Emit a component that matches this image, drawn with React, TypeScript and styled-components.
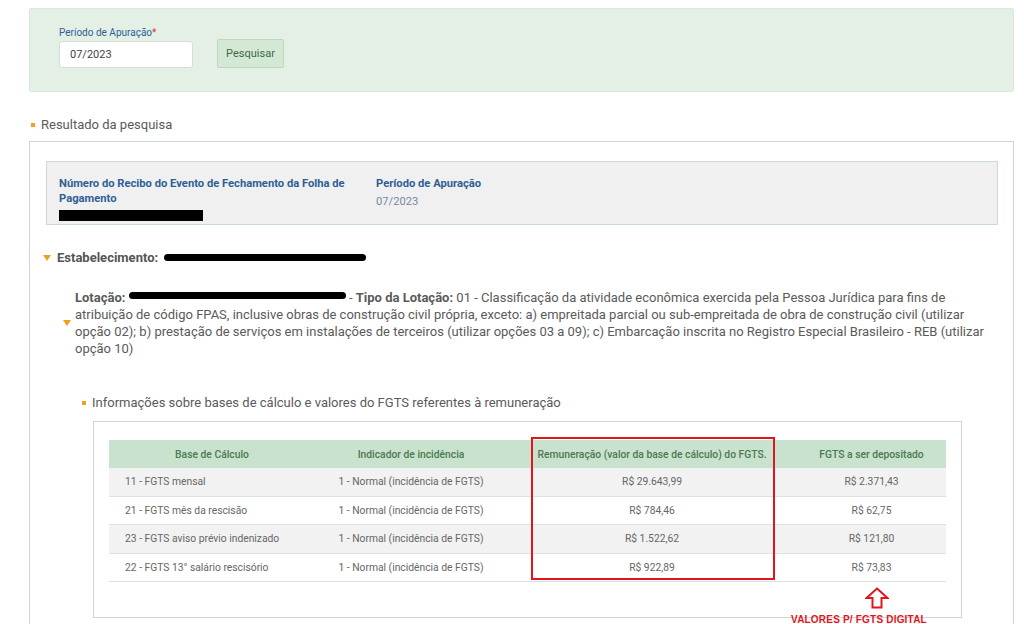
import React from 'react'
import styled, { createGlobalStyle } from 'styled-components'

const GlobalStyle = createGlobalStyle`
  html, body {
    margin: 0;
    padding: 0;
    background: #ffffff;
    font-family: Roboto, 'Liberation Sans', Arial, sans-serif;
    color: #555555;
    overflow: hidden;
  }
`

type Row = {
  base: string
  indicador: string
  remuneracao: string
  fgts: string
}

const rows: Row[] = [
  { base: '11 - FGTS mensal', indicador: '1 - Normal (incidência de FGTS)', remuneracao: 'R$ 29.643,99', fgts: 'R$ 2.371,43' },
  { base: '21 - FGTS mês da rescisão', indicador: '1 - Normal (incidência de FGTS)', remuneracao: 'R$ 784,46', fgts: 'R$ 62,75' },
  { base: '23 - FGTS aviso prévio indenizado', indicador: '1 - Normal (incidência de FGTS)', remuneracao: 'R$ 1.522,62', fgts: 'R$ 121,80' },
  { base: '22 - FGTS 13° salário rescisório', indicador: '1 - Normal (incidência de FGTS)', remuneracao: 'R$ 922,89', fgts: 'R$ 73,83' },
]

const App: React.FC = () => {
  return (
    <>
      <GlobalStyle />
      <Page>
        <SearchPanel>
          <Field>
            <Label>
              Período de Apuração<Required>*</Required>
            </Label>
            <Input defaultValue="07/2023" />
          </Field>
          <SearchButton>Pesquisar</SearchButton>
        </SearchPanel>

        <SectionTitle>Resultado da pesquisa</SectionTitle>

        <ResultBox>
          <InfoPanel>
            <InfoCol $width={305}>
              <InfoLabel>Número do Recibo do Evento de Fechamento da Folha de Pagamento</InfoLabel>
              <Redacted $width={144} $height={11} />
            </InfoCol>
            <InfoCol $width={200}>
              <InfoLabel>Período de Apuração</InfoLabel>
              <InfoValue>07/2023</InfoValue>
            </InfoCol>
          </InfoPanel>

          <Estabelecimento>
            <Caret />
            <strong>Estabelecimento:</strong>
            <Redacted $width={202} $height={7} $round />
          </Estabelecimento>

          <Lotacao>
            <Caret />
            <LotacaoText>
              <strong>Lotação:</strong> <Redacted $width={217} $height={7} $round $inline /> - <strong>Tipo da Lotação:</strong>{' '}
              01 - Classificação da atividade econômica exercida pela Pessoa Jurídica para fins de atribuição de código
              FPAS, inclusive obras de construção civil própria, exceto: a) empreitada parcial ou sub-empreitada de obra
              de construção civil (utilizar opção 02); b) prestação de serviços em instalações de terceiros (utilizar
              opções 03 a 09); c) Embarcação inscrita no Registro Especial Brasileiro - REB (utilizar opção 10)
            </LotacaoText>
          </Lotacao>

          <SubTitle>Informações sobre bases de cálculo e valores do FGTS referentes à remuneração</SubTitle>

          <TableBox>
            <Table>
              <colgroup>
                <Col $width={206} />
                <Col $width={192} />
                <Col $width={290} />
                <Col />
              </colgroup>
              <thead>
                <tr>
                  <Th>Base de Cálculo</Th>
                  <Th>Indicador de incidência</Th>
                  <Th>Remuneração (valor da base de cálculo) do FGTS.</Th>
                  <Th>FGTS a ser depositado</Th>
                </tr>
              </thead>
              <tbody>
                {rows.map((r) => (
                  <Tr key={r.base}>
                    <Td>{r.base}</Td>
                    <Td $center>{r.indicador}</Td>
                    <Td $center>{r.remuneracao}</Td>
                    <Td $center>{r.fgts}</Td>
                  </Tr>
                ))}
              </tbody>
            </Table>

            <Highlight />
            <Arrow viewBox="0 0 24 22" width="24" height="22">
              <path d="M12 1.5 L22.5 11 L16.5 11 L16.5 20.5 L7.5 20.5 L7.5 11 L1.5 11 Z" fill="none" stroke="#e3151c" strokeWidth="2" />
            </Arrow>
            <Note>VALORES P/ FGTS DIGITAL</Note>
          </TableBox>
        </ResultBox>
      </Page>
    </>
  )
}
export default App

const Page = styled.div`
  padding: 8px 10px 0 29px;
`

const SearchPanel = styled.div`
  display: flex;
  align-items: flex-end;
  gap: 24px;
  height: 84px;
  box-sizing: border-box;
  padding: 24px 29px 23px;
  background: #e4efe5;
  border: 1px solid #dbe9dc;
  border-radius: 2px;
`

const Field = styled.div`
  display: flex;
  flex-direction: column;
  gap: 2px;
`

const Label = styled.label`
  font-size: 10px;
  line-height: 13px;
  color: #2d5f95;
`

const Required = styled.span`
  color: #d9333f;
`

const Input = styled.input`
  width: 134px;
  height: 27px;
  box-sizing: border-box;
  border: 1px solid #d6dbe0;
  border-radius: 3px;
  padding: 0 10px;
  font-family: Roboto, 'Liberation Sans', Arial, sans-serif;
  font-size: 11px;
  color: #444;
  background: #ffffff;
  outline: none;
`

const SearchButton = styled.button`
  height: 29px;
  width: 67px;
  box-sizing: border-box;
  padding: 0;
  border: 1px solid #bcd8bf;
  border-radius: 2px;
  background: #d3e8d5;
  color: #3e6a42;
  font-family: Roboto, 'Liberation Sans', Arial, sans-serif;
  font-size: 11px;
  cursor: pointer;
`

const SectionTitle = styled.h3`
  display: flex;
  align-items: center;
  gap: 6px;
  margin: 24px 0 8px 2px;
  font-size: 13px;
  line-height: 17px;
  font-weight: normal;
  color: #5a5a5a;
  &::before {
    content: '';
    width: 4px;
    height: 4px;
    background: #f0a020;
  }
`

const ResultBox = styled.div`
  border: 1px solid #ccd5df;
  border-bottom: none;
  padding: 19px 15px 0 16px;
  min-height: 500px;
`

const InfoPanel = styled.div`
  display: flex;
  gap: 12px;
  background: #f0f0f0;
  border: 1px solid #c9ddc9;
  padding: 14px 12px 3px;
  height: 64px;
  box-sizing: border-box;
`

const InfoCol = styled.div<{ $width: number }>`
  width: ${(p) => p.$width}px;
  display: flex;
  flex-direction: column;
`

const InfoLabel = styled.div`
  font-size: 11.2px;
  line-height: 15px;
  font-weight: bold;
  color: #2d5f95;
`

const InfoValue = styled.div`
  font-size: 11.2px;
  line-height: 15px;
  margin-top: 3px;
  color: #7689a0;
`

const Redacted = styled.span<{ $width: number; $height: number; $round?: boolean; $inline?: boolean }>`
  display: inline-block;
  flex-shrink: 0;
  width: ${(p) => p.$width}px;
  height: ${(p) => p.$height}px;
  background: #000000;
  border-radius: ${(p) => (p.$round ? '4px' : '0')};
  margin-top: ${(p) => (p.$round ? '0' : '4px')};
  vertical-align: ${(p) => (p.$inline ? '3px' : 'baseline')};
`

const Caret = styled.span`
  flex-shrink: 0;
  width: 0;
  height: 0;
  border-left: 4px solid transparent;
  border-right: 4px solid transparent;
  border-top: 6px solid #f0a020;
`

const Estabelecimento = styled.div`
  display: flex;
  align-items: center;
  gap: 6px;
  margin: 24px 0 0 -3px;
  font-size: 13px;
  line-height: 17px;
  color: #555;
  strong {
    font-weight: bold;
  }
`

const Lotacao = styled.div`
  display: flex;
  align-items: center;
  gap: 4px;
  margin: 23px 6px 0 17px;
`

const LotacaoText = styled.p`
  margin: 0;
  font-size: 13px;
  line-height: 17px;
  color: #5a5a5a;
  strong {
    font-weight: bold;
  }
`

const SubTitle = styled.h4`
  display: flex;
  align-items: center;
  gap: 6px;
  margin: 37px 0 10px 36px;
  font-size: 13px;
  line-height: 17px;
  font-weight: normal;
  color: #5a5a5a;
  &::before {
    content: '';
    width: 4px;
    height: 4px;
    background: #f0a020;
  }
`

const TableBox = styled.div`
  position: relative;
  margin-left: 47px;
  width: 869px;
  box-sizing: border-box;
  border: 1px solid #ccd5df;
  padding: 18px 15px 35px;
`

const Table = styled.table`
  width: 100%;
  border-collapse: collapse;
  table-layout: fixed;
  font-size: 10.3px;
`

const Col = styled.col<{ $width?: number }>`
  width: ${(p) => (p.$width ? `${p.$width}px` : 'auto')};
`

const Th = styled.th`
  height: 28px;
  padding: 0 4px;
  background: #c9e2ce;
  color: #4a7a4f;
  font-weight: 500;
  text-align: center;
  white-space: nowrap;
`

const Tr = styled.tr`
  border-bottom: 1px solid #dde2e8;
  &:nth-child(odd) {
    background: #f2f2f2;
  }
  &:nth-child(even) {
    background: #ffffff;
  }
`

const Td = styled.td<{ $center?: boolean }>`
  height: 27.5px;
  padding: 0 0 0 ${(p) => (p.$center ? '0' : '16px')};
  color: #666666;
  text-align: ${(p) => (p.$center ? 'center' : 'left')};
  white-space: nowrap;
`

const Highlight = styled.div`
  position: absolute;
  left: 437px;
  top: 15px;
  width: 244px;
  height: 143px;
  box-sizing: border-box;
  border: 2px solid #e3151c;
  pointer-events: none;
`

const Arrow = styled.svg`
  position: absolute;
  left: 771px;
  top: 165px;
`

const Note = styled.div`
  position: absolute;
  left: 697px;
  top: 192px;
  font-family: 'Liberation Sans', Arial, sans-serif;
  font-size: 10px;
  font-weight: bold;
  letter-spacing: 0.2px;
  color: #e3151c;
  white-space: nowrap;
`
